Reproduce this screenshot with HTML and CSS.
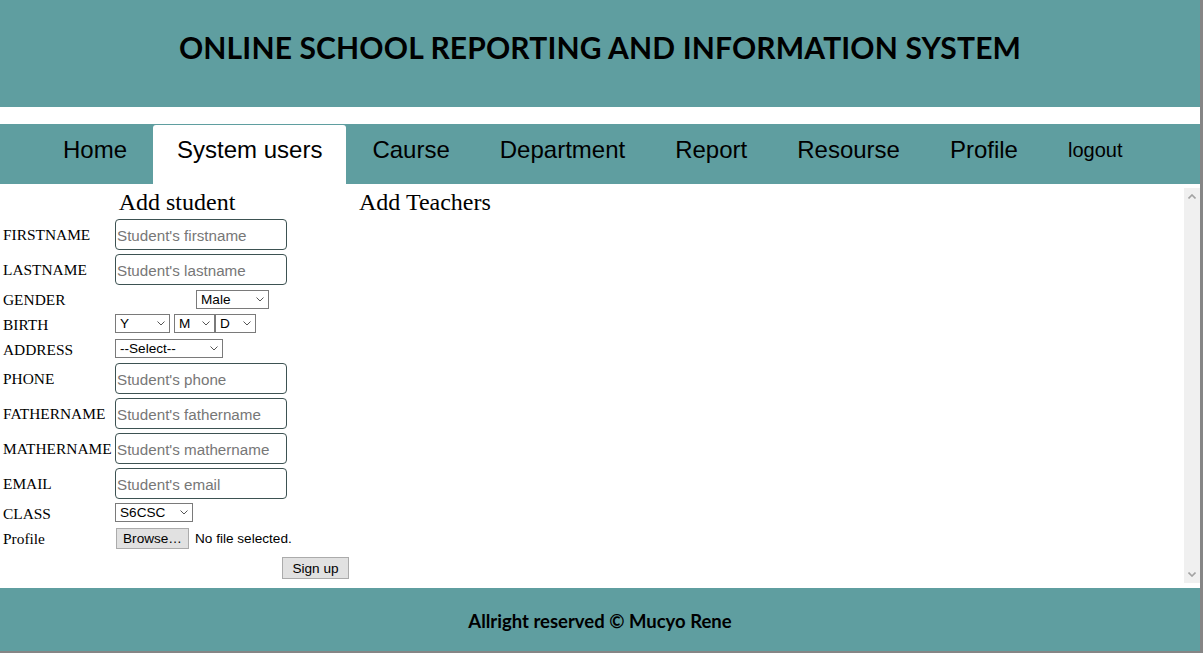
FILE: index.html
```html
<!DOCTYPE html>
<html lang="en">
<head>
<meta charset="utf-8">
<title>Online School Reporting and Information System</title>
<link rel="stylesheet" href="styles.css">
</head>
<body>
<div class="frame">
  <header class="top">
    <h1 class="title">ONLINE SCHOOL REPORTING AND INFORMATION SYSTEM</h1>
  </header>
  <nav class="nav">
    <a class="tab" href="#">Home</a>
    <a class="tab active" href="#">System users</a>
    <a class="tab" href="#">Caurse</a>
    <a class="tab" href="#">Department</a>
    <a class="tab" href="#">Report</a>
    <a class="tab" href="#">Resourse</a>
    <a class="tab" href="#">Profile</a>
    <a class="tab small" href="#">logout</a>
  </nav>
  <main class="main">
    <div class="content">
      <section class="student">
        <h2 class="sec-title">Add student</h2>
        <form class="form">
          <label class="lbl">FIRSTNAME</label>
          <div class="cell"><input class="field" placeholder="Student's firstname"></div>

          <label class="lbl">LASTNAME</label>
          <div class="cell"><input class="field" placeholder="Student's lastname"></div>

          <label class="lbl">GENDER</label>
          <div class="cell sel-row row-gender center">
            <span class="sel w-gender"><select><option>Male</option><option>Female</option></select><svg class="chev" width="8" height="5" viewBox="0 0 8 5"><path d="M0.5 0.5L4 4L7.5 0.5" fill="none" stroke="#555" stroke-width="1"/></svg></span>
          </div>

          <label class="lbl">BIRTH</label>
          <div class="cell sel-row">
            <span class="sel w-y"><select><option>Y</option></select><svg class="chev" width="8" height="5" viewBox="0 0 8 5"><path d="M0.5 0.5L4 4L7.5 0.5" fill="none" stroke="#555" stroke-width="1"/></svg></span>
            <span class="sel w-md"><select><option>M</option></select><svg class="chev" width="8" height="5" viewBox="0 0 8 5"><path d="M0.5 0.5L4 4L7.5 0.5" fill="none" stroke="#555" stroke-width="1"/></svg></span>
            <span class="sel w-md"><select><option>D</option></select><svg class="chev" width="8" height="5" viewBox="0 0 8 5"><path d="M0.5 0.5L4 4L7.5 0.5" fill="none" stroke="#555" stroke-width="1"/></svg></span>
          </div>

          <label class="lbl">ADDRESS</label>
          <div class="cell sel-row row-short">
            <span class="sel w-address"><select><option>--Select--</option></select><svg class="chev" width="8" height="5" viewBox="0 0 8 5"><path d="M0.5 0.5L4 4L7.5 0.5" fill="none" stroke="#555" stroke-width="1"/></svg></span>
          </div>

          <label class="lbl">PHONE</label>
          <div class="cell"><input class="field" placeholder="Student's phone"></div>

          <label class="lbl">FATHERNAME</label>
          <div class="cell"><input class="field" placeholder="Student's fathername"></div>

          <label class="lbl">MATHERNAME</label>
          <div class="cell"><input class="field" placeholder="Student's mathername"></div>

          <label class="lbl">EMAIL</label>
          <div class="cell"><input class="field" placeholder="Student's email"></div>

          <label class="lbl">CLASS</label>
          <div class="cell sel-row">
            <span class="sel w-class"><select><option>S6CSC</option></select><svg class="chev" width="8" height="5" viewBox="0 0 8 5"><path d="M0.5 0.5L4 4L7.5 0.5" fill="none" stroke="#555" stroke-width="1"/></svg></span>
          </div>

          <label class="lbl">Profile</label>
          <div class="cell file">
            <button type="button" class="btn browse">Browse…</button>
            <span class="file-note">No file selected.</span>
          </div>

          <span class="lbl"></span>
          <div class="cell submit">
            <button type="button" class="btn signup">Sign up</button>
          </div>
        </form>
      </section>
      <section class="teachers">
        <h2 class="sec-title">Add Teachers</h2>
      </section>
    </div>
    <div class="scrollbar">
      <svg class="arrow" width="8" height="5" viewBox="0 0 8 5"><path d="M0.5 4.5L4 1L7.5 4.5" fill="none" stroke="#a3a3a3" stroke-width="1.6"/></svg>
      <svg class="arrow" width="8" height="5" viewBox="0 0 8 5"><path d="M0.5 0.5L4 4L7.5 0.5" fill="none" stroke="#a3a3a3" stroke-width="1.6"/></svg>
    </div>
  </main>
  <footer class="foot">Allright reserved © Mucyo Rene</footer>
</div>
</body>
</html>
```

FILE: styles.css
```css
html, body {
  margin: 0;
  padding: 0;
  background: #ffffff;
}

.frame {
  width: 1200px;
  height: 651px;
  border-right: 3px solid #858585;
  border-bottom: 2px solid #858585;
  display: flex;
  flex-direction: column;
  overflow: hidden;
}

/* Header */
.top {
  height: 107px;
  flex: none;
  box-sizing: border-box;
  background: #5f9ea0;
  padding-top: 30px;
  margin-bottom: 17px;
}

.title {
  margin: 0;
  text-align: center;
  font: 700 30px/35px Lato, "Open Sans", sans-serif;
  letter-spacing: 0.15px;
  color: #000;
}

/* Navigation */
.nav {
  height: 60px;
  flex: none;
  box-sizing: border-box;
  background: #5f9ea0;
  display: flex;
  gap: 2px;
  padding: 1px 0 0 39px;
}

.tab {
  padding: 11px 24px 0;
  font: 400 24px/27px "Liberation Sans", Arial, sans-serif;
  color: #000;
  text-decoration: none;
}

.tab.active {
  background: #ffffff;
  border-radius: 3px 3px 0 0;
}

.tab.small {
  font-size: 20px;
  padding-top: 12px;
}

/* Main area */
.main {
  height: 404px;
  flex: none;
  display: flex;
}

.content {
  flex: 1;
  display: flex;
  align-items: flex-start;
}

.student {
  width: 354px;
}

.teachers {
  margin-left: 2px;
}

.sec-title {
  margin: 5px 0 3px;
  font: 400 24px/27px "Liberation Serif", "Times New Roman", serif;
  color: #000;
}

.student .sec-title {
  text-align: center;
}

.teachers .sec-title {
  padding-left: 3px;
}

.form {
  display: grid;
  grid-template-columns: 110px 235px;
  column-gap: 2px;
  row-gap: 4px;
  padding-left: 3px;
  align-items: center;
}

.lbl {
  font: 400 15.4px/17px "Liberation Serif", "Times New Roman", serif;
  color: #000;
}

.cell {
  display: flex;
  align-items: center;
}

.sel-row {
  height: 21px;
  box-sizing: border-box;
  align-items: flex-start;
}

.row-gender {
  padding-top: 1px;
}

.row-short {
  height: 20px;
}

.center {
  justify-content: center;
}

.field {
  width: 172px;
  height: 31px;
  box-sizing: border-box;
  margin: 0;
  border: 1px solid #3d5252;
  border-radius: 4px;
  padding: 1px 1px 0;
  font: 400 15.2px "Liberation Sans", Arial, sans-serif;
  color: #000;
  background: #fff;
}

.field::placeholder {
  color: #777777;
  opacity: 1;
}

/* Selects */
.sel {
  position: relative;
  display: inline-block;
  height: 19px;
}

.sel select {
  appearance: none;
  -webkit-appearance: none;
  display: block;
  width: 100%;
  height: 19px;
  box-sizing: border-box;
  margin: 0;
  padding: 0 0 0 4px;
  border: 1px solid #7a7a7a;
  border-radius: 0;
  background: #fff;
  font: 400 13.6px "Liberation Sans", Arial, sans-serif;
  color: #000;
}

.sel .chev {
  position: absolute;
  right: 5px;
  top: 7px;
  pointer-events: none;
}

.w-gender { width: 73px; }
.w-y { width: 55px; margin-right: 4px; }
.w-md { width: 41px; }
.w-address { width: 108px; }
.w-class { width: 78px; }

/* Buttons */
.btn {
  box-sizing: border-box;
  margin: 0;
  padding: 0;
  border: 1px solid #ababab;
  border-radius: 0;
  background: #e1e1e1;
  font: 400 13.6px "Liberation Sans", Arial, sans-serif;
  color: #000;
  text-align: center;
}

.file {
  gap: 6px;
}

.browse {
  width: 73px;
  height: 21px;
  margin-left: 1px;
}

.file-note {
  font: 400 13.6px "Liberation Sans", Arial, sans-serif;
  color: #000;
}

.submit {
  justify-content: flex-end;
  padding-top: 4px;
}

.signup {
  width: 67px;
  height: 22px;
  margin-right: 1px;
}

/* Fake scrollbar */
.scrollbar {
  width: 16px;
  flex: none;
  margin: 4px 0 5px;
  background: #f0f0f0;
  display: flex;
  flex-direction: column;
  justify-content: space-between;
  align-items: center;
  padding: 6px 0;
  box-sizing: border-box;
}

.arrow {
  display: block;
}

/* Footer */
.foot {
  height: 63px;
  flex: none;
  box-sizing: border-box;
  background: #5f9ea0;
  padding-top: 23px;
  text-align: center;
  font: 700 18.5px/21px Lato, "Open Sans", sans-serif;
  color: #000;
}
```
